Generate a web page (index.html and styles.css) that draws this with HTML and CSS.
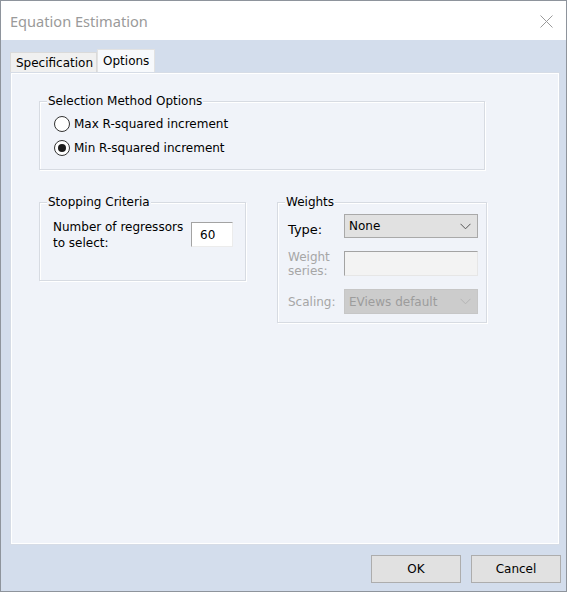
FILE: index.html
```html
<!DOCTYPE html>
<html>
<head>
<meta charset="utf-8">
<link rel="stylesheet" href="styles.css">
</head>
<body>
<div class="window">
  <div class="titlebar">
    <span class="title">Equation Estimation</span>
    <svg class="close" width="13" height="13" viewBox="0 0 13 13"><path d="M0.5 0.5 L12.5 12.5 M12.5 0.5 L0.5 12.5" stroke="#9a9a9a" stroke-width="1" fill="none"/></svg>
  </div>
  <div class="body">
    <div class="tabs">
      <div class="tab">Specification</div>
      <div class="tab active">Options</div>
    </div>
    <div class="panel">
      <div class="group sel">
        <span class="legend">Selection Method Options</span>
        <div class="radios">
          <div class="radio"><span class="dot"></span>Max R-squared increment</div>
          <div class="radio"><span class="dot on"></span>Min R-squared increment</div>
        </div>
      </div>
      <div class="row">
        <div class="group stop">
          <span class="legend">Stopping Criteria</span>
          <div class="stoprow">
            <div class="lbl">Number of regressors<br>to select:</div>
            <div class="input num">60</div>
          </div>
        </div>
        <div class="group weights">
          <span class="legend">Weights</span>
          <div class="wrow r1">
            <div class="wl type">Type:</div>
            <div class="select"><span>None</span><svg width="11" height="7" viewBox="0 0 11 7"><path d="M0.5 0.8 L5.5 5.8 L10.5 0.8" stroke="#555" stroke-width="1" fill="none"/></svg></div>
          </div>
          <div class="wrow r2">
            <div class="wl dis two">Weight<br>series:</div>
            <div class="input wide"></div>
          </div>
          <div class="wrow r3">
            <div class="wl dis scal">Scaling:</div>
            <div class="select disabled"><span>EViews default</span><svg width="11" height="7" viewBox="0 0 11 7"><path d="M0.5 0.8 L5.5 5.8 L10.5 0.8" stroke="#b4b4b4" stroke-width="1" fill="none"/></svg></div>
          </div>
        </div>
      </div>
    </div>
    <div class="buttons">
      <div class="btn">OK</div>
      <div class="btn">Cancel</div>
    </div>
  </div>
</div>
</body>
</html>
```
FILE: styles.css
```css
* { box-sizing: border-box; }
html, body { margin: 0; padding: 0; }
body {
  width: 569px; height: 593px; overflow: hidden;
  font-family: "DejaVu Sans", "Noto Sans", sans-serif;
  font-size: 12px; color: #000;
  background: #fff;
}
.window {
  width: 567px; height: 592px;
  border: 1px solid #8e949c;
  display: flex; flex-direction: column;
  background: #d3ddec;
}
.titlebar {
  height: 39px; flex: none; background: #fff;
  display: flex; align-items: center; justify-content: space-between;
  padding: 1px 13px 0 9px;
}
.title { font-family: "Noto Sans", sans-serif; font-size: 14.6px; color: #9a9a9a; }
.body { flex: 1; display: flex; flex-direction: column; padding: 9px 5px 0 9px; }
.tabs { display: flex; align-items: flex-end; height: 23px; flex: none; }
.tab {
  height: 20px; padding: 0 3px 0 5px; line-height: 20px;
  background: #f0f0f0; border: 1px solid #dadada; border-bottom: none;
}
.tab.active {
  height: 23px; background: #f7f9fc; line-height: 22px; padding: 0 5px 0 5px;
  border-color: #e2e2e2;
}
.panel {
  height: 473px; flex: none; margin-right: 1px;
  background: #f0f3f9;
  border: 1px solid #d6dce6;
  box-shadow: inset 1px 1px 0 #fff, inset -1px -1px 0 #fff;
  padding: 28px 0 0 28px;
}
.group {
  border: 1px solid #d7dbe2;
  box-shadow: inset 1px 1px 0 #fff, 1px 1px 0 #fff;
}
.legend {
  display: table; line-height: 14px; height: 14px;
  margin: -8px 0 0 7px; padding: 0 1px;
  background: #f0f3f9;
}
.sel { width: 446px; height: 69px; }
.radios { margin: 4px 0 0 14px; }
.radio { display: flex; align-items: center; height: 24px; }
.dot {
  width: 16px; height: 16px; border-radius: 50%;
  border: 1px solid #333; background: #fff; margin-right: 4px;
  display: flex; align-items: center; justify-content: center;
}
.dot.on::after { content: ""; width: 8px; height: 8px; border-radius: 50%; background: #1c1c1c; }
.row { display: flex; gap: 31px; margin-top: 32px; align-items: flex-start; }
.stop { width: 207px; height: 79px; }
.stoprow { display: flex; align-items: flex-start; margin: 10px 0 0 13px; }
.lbl { width: 138px; line-height: 16px; }
.input {
  background: #fff;
  border-top: 1px solid #a3a3a3; border-left: 1px solid #a3a3a3;
  border-right: 1px solid #ececec; border-bottom: 1px solid #ececec;
}
.num { width: 42px; height: 25px; margin-top: 3px; padding: 5px 0 0 8px; line-height: 14px; }
.weights { width: 210px; height: 121px; }
.weights .legend { margin-left: 7px; }
.wrow { display: flex; align-items: flex-start; margin-left: 10px; }
.r1 { margin-top: 5px; }
.r2 { margin-top: 13px; }
.r3 { margin-top: 11px; }
.wl { width: 56px; line-height: 16px; }
.type { font-size: 13px; padding-top: 8px; }
.wl.dis { color: #a6a6a6; }
.two { line-height: 14px; margin-top: -1px; }
.scal { padding-top: 5px; }
.select {
  width: 134px; height: 24px; background: #e1e1e1; border: 1px solid #a9a9a9;
  display: flex; align-items: center; justify-content: space-between; padding: 0 6px 0 4px;
}
.r3 .select { height: 25px; }
.select.disabled { background: #cccccc; border-color: #c6c6c6; color: #9c9c9c; }
.wide { width: 134px; height: 25px; background: #f3f3f3; border-right-color: #e6e6e6; border-bottom-color: #e6e6e6; }
.buttons { display: flex; justify-content: flex-end; gap: 10px; margin-top: 10px; }
.btn {
  width: 90px; height: 28px; background: #e1e1e1; border: 1px solid #adadad;
  display: flex; align-items: center; justify-content: center;
}
```
